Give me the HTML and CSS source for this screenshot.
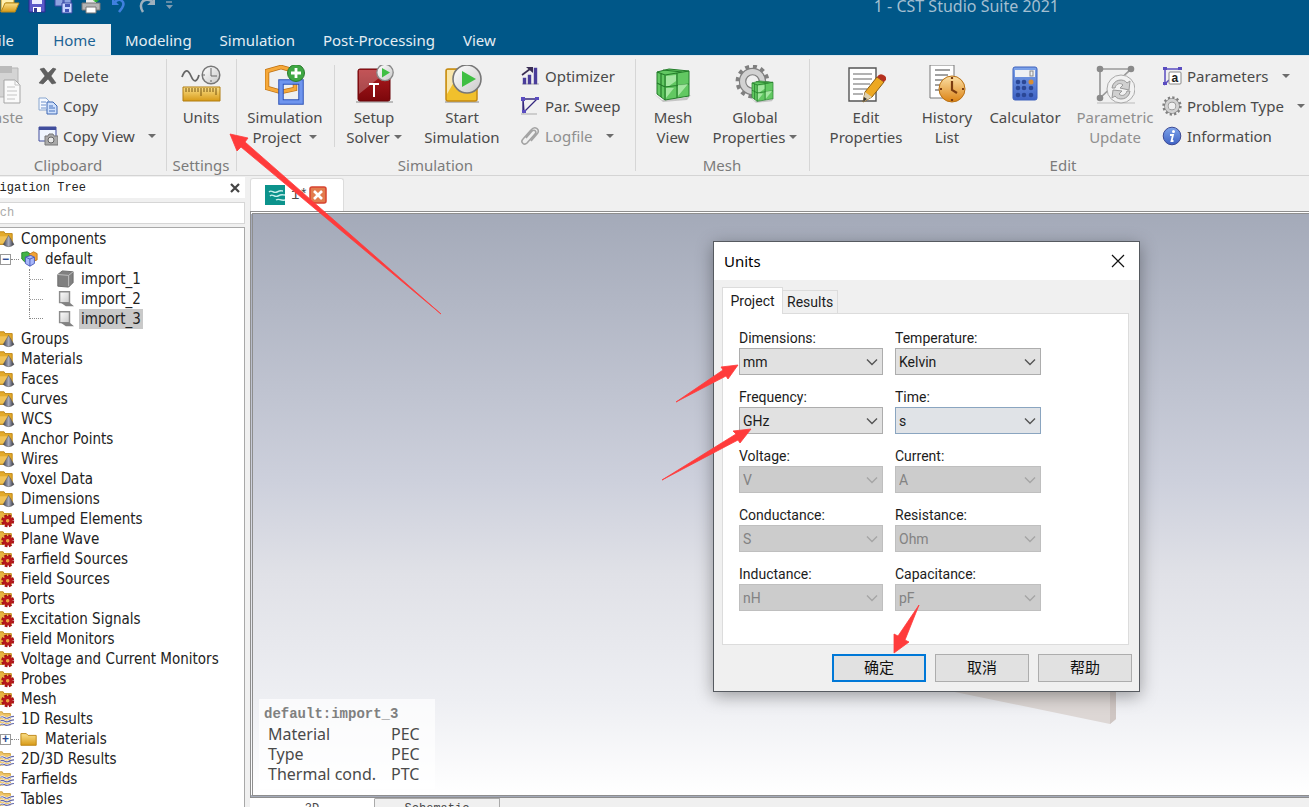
FILE: index.html
```html
<!DOCTYPE html>
<html lang="en">
<head>
<meta charset="utf-8">
<title>1 - CST Studio Suite 2021</title>
<link rel="stylesheet" href="styles.css">
</head>
<body>
<svg class="defs" aria-hidden="true">
  <defs>
    <linearGradient id="gold" x1="0" y1="0" x2="0" y2="1"><stop offset="0" stop-color="#fbe08a"/><stop offset="1" stop-color="#d79a17"/></linearGradient>
    <linearGradient id="red" x1="0" y1="0" x2="0" y2="1"><stop offset="0" stop-color="#b01c20"/><stop offset="1" stop-color="#7c070b"/></linearGradient>
    <linearGradient id="steel" x1="0" y1="0" x2="1" y2="1"><stop offset="0" stop-color="#fff"/><stop offset="1" stop-color="#c9c9c9"/></linearGradient>
    <linearGradient id="cone" x1="0" y1="0" x2="1" y2="0"><stop offset="0" stop-color="#3d3f4a"/><stop offset=".5" stop-color="#a9adc0"/><stop offset="1" stop-color="#30323b"/></linearGradient>
    <linearGradient id="orange" x1="0" y1="0" x2="0" y2="1"><stop offset="0" stop-color="#fbe0a6"/><stop offset="1" stop-color="#dc8314"/></linearGradient>
    <linearGradient id="blue" x1="0" y1="0" x2="0" y2="1"><stop offset="0" stop-color="#7ea4ea"/><stop offset="1" stop-color="#3f62c4"/></linearGradient>
  </defs>
  <symbol id="folder" viewBox="0 0 20 20"><path d="M1 4h6l2 2h9v11H1z" fill="url(#gold)" stroke="#bb8210"/></symbol>
  <symbol id="f-cone" viewBox="0 0 20 20"><path d="M-2 2h11l1 2h8v12H-2z" fill="#e3aa2c" stroke="#bb8210"/><path d="M0 7h15v8H0z" fill="#f0c358"/><path d="M14 6l6 10q-6 5-12 0z" fill="url(#cone)" stroke="#555" stroke-width=".6"/></symbol>
  <symbol id="f-gear" viewBox="0 0 20 20"><path d="M-2 2h10l1 2h8v12H-2z" fill="#e8b542" stroke="#bb8210"/><circle cx="13" cy="12" r="5.6" fill="none" stroke="#a71216" stroke-width="3.200" stroke-dasharray="2.900 1.500"/><circle cx="13" cy="12" r="3.600" fill="none" stroke="#b8181c" stroke-width="3.400"/><circle cx="13" cy="12" r="1.500" fill="#f0a040"/></symbol>
  <symbol id="f-wave" viewBox="0 0 20 20"><path d="M-2 2h9l1 2h8v13H-2z" fill="#efc568" stroke="#c99b35"/><path d="M5 8c4-2 4 2 8 1s3-2 7-2M5 12c4-2 4 2 8 1s3-2 7-2M5 16c4-2 4 2 8 1s3-2 7-2" fill="none" stroke="#fff" stroke-width="2.600"/><path d="M5 8c4-2 4 2 8 1s3-2 7-2M5 12c4-2 4 2 8 1s3-2 7-2M5 16c4-2 4 2 8 1s3-2 7-2" fill="none" stroke="#6368a8" stroke-width="1.300"/></symbol>
  <symbol id="sheet" viewBox="0 0 20 20"><path d="M4 2h11v12H4z" fill="url(#steel)" stroke="#8c8c8c" stroke-width="1.600"/><path d="M5 14h10l5 4h-9z" fill="#828282"/></symbol>
  <symbol id="chev" viewBox="0 0 12 8"><path d="M1 1.500l5 5 5-5" fill="none" stroke="currentColor" stroke-width="1.400"/></symbol>
  <symbol id="cube" viewBox="0 0 38 34"><path d="M0 26l8 6 22-2 7-3-4 5-24 2z" fill="#999" opacity=".5"/><path d="M3 4l12-3 20 2v25l-24 4-8-6z" fill="#62c862" stroke="#237c2a"/><path d="M3 4l8 3 24-4M11 7v25M3 15l8 4 24-3M23 5v25M7 5v24M9 2l19 2" fill="none" stroke="#237c2a" stroke-width="1.200"/><path d="M12 8l10-1v6l-7 5h-3zM24 17l10-1-10 12zM12 20h8l-8 10z" fill="#b4eeb0" opacity=".8"/></symbol>
  <symbol id="gear" viewBox="0 0 30 30"><circle cx="15" cy="15" r="12.500" fill="none" stroke="#808080" stroke-width="4" stroke-dasharray="3.300 3.245"/><circle cx="15" cy="15" r="8.500" fill="none" stroke="#808080" stroke-width="6.400"/><circle cx="15" cy="15" r="8.500" fill="none" stroke="#d2d2d2" stroke-width="4.400"/></symbol>
</svg>

<div class="app">
  <header class="header">
    <div class="titlebar">
      <div class="quick">
        <button aria-label="Open"><svg viewBox="0 0 20 20"><path d="M1 3h13v4H6l-5 9z" fill="#fff0b0" stroke="#b98a1a"/><path d="M5 7h14l-4 9H1z" fill="url(#gold)" stroke="#b98a1a"/></svg></button>
        <button aria-label="Save"><svg viewBox="0 0 20 20"><path d="M2 1h16v15H2z" fill="#5a5ac8" stroke="#2b2b90"/><path d="M5 1h10v7H5z" fill="#e9edff"/><path d="M6 11h8v5H6z" fill="#fff"/><path d="M7 12h3v4H7z" fill="#333b90"/></svg></button>
        <button aria-label="Save all"><svg viewBox="0 0 20 20"><path d="M1 1h9v9H1zM9 3h8v10H9z" fill="#8da3e0" stroke="#394aa5"/><path d="M8 7h10v10H8z" fill="#c8d4ff" stroke="#394aa5"/><path d="M11 8h5v3h-5zM11 13h4v3h-4z" fill="#4355b5"/></svg></button>
        <button aria-label="Print"><svg viewBox="0 0 20 20"><path d="M5 0h10v8H5z" fill="#eee"/><path d="M1 7h18v7H1z" fill="#b5b5b5" stroke="#777"/><path d="M5 11h10v6H5z" fill="#fff" stroke="#777"/><path d="M12 3h6M15 0v6" stroke="#35b13a" stroke-width="3"/></svg></button>
        <button aria-label="Undo"><svg viewBox="0 0 20 20"><path d="M4 2v7h7z" fill="#4080df"/><path d="M7 6c5-5 11 0 7 6l-3 4" fill="none" stroke="#4080df" stroke-width="2.500"/></svg></button>
        <button aria-label="Redo"><svg viewBox="0 0 20 20"><path d="M20 2v7h-8z" fill="#9eb0bd"/><path d="M17 5C8 1 3 8 8 16" fill="none" stroke="#9eb0bd" stroke-width="2.500"/></svg></button>
        <button aria-label="Customize"><svg viewBox="0 0 20 20"><path d="M4 6h6" stroke="#7f9bb0" stroke-width="1.500"/><path d="M4 9h7l-3.500 4z" fill="#7f9bb0"/></svg></button>
      </div>
      <h1 class="title">1 - CST Studio Suite 2021</h1>
    </div>
    <nav class="tabs">
      <button class="tab tab-file">File</button>
      <button class="tab tab-on">Home</button>
      <button class="tab">Modeling</button>
      <button class="tab">Simulation</button>
      <button class="tab">Post-Processing</button>
      <button class="tab">View</button>
    </nav>
  </header>

  <section class="ribbon">
    <div class="group g-clip">
      <div class="tools">
        <button class="big b-paste off"><svg viewBox="0 0 40 40"><path d="M8 3h26v29H8z" fill="#d4d4d4" stroke="#b5b5b5"/><path d="M14 1h14v7H14z" fill="#bbb"/><path d="M20 15h11l5 5v18H20z" fill="#fafafa" stroke="#a5a5a5"/><path d="M31 15v5h5M23 22h8M23 26h10M23 30h10M23 34h8" fill="none" stroke="#c4c4c4"/></svg><span>Paste</span></button>
        <div class="list l-clip">
          <button class="small"><svg viewBox="0 0 20 20"><path d="M2 3l4-1 4 5 5-5 3 1-5 7 5 7-4 1-4-5-5 5-4-1 6-7z" fill="#606060" stroke="#4c4c4c" stroke-width=".5"/></svg>Delete</button>
          <button class="small"><svg viewBox="0 0 20 20"><path d="M1 2h7l3 3v9H1z" fill="#f5f9ff" stroke="#89a6cf"/><path d="M3 6h5M3 9h5M3 12h5" stroke="#6d90cb"/><path d="M9 6h6l4 4v8H9z" fill="#cfe0fb" stroke="#3c67b3"/><path d="M11 10h4M11 12h6M11 15h6" stroke="#4470bd"/></svg>Copy</button>
          <button class="small"><svg viewBox="0 0 20 20"><path d="M1 1h17v14H1z" fill="#f0f6ff" stroke="#404d9c"/><path d="M1 1h17v3H1z" fill="#404d9c"/><path d="M7 10h3l1-2h4l1 2h4v9H7z" fill="#aaa" stroke="#777"/><circle cx="13" cy="14" r="3" fill="#e8e8e8" stroke="#666"/></svg>Copy View<i class="caret"></i></button>
        </div>
      </div>
      <h2>Clipboard</h2>
    </div>
    <div class="group g-set">
      <div class="tools">
        <button class="big b-units"><svg viewBox="0 0 40 40"><path d="M1 12c3-8 6-8 9-1s6 6 8-1" fill="none" stroke="#666" stroke-width="1.800"/><circle cx="30" cy="10" r="8.800" fill="url(#steel)" stroke="#777" stroke-width="1.500"/><path d="M30 3v8h6M30 17v-2M22 10h2" fill="none" stroke="#666"/><path d="M2 22h37v14H2z" fill="url(#gold)" stroke="#b07c10"/><path d="M5 23v4M8 23v4M11 23v4M14 23v4M17 23v4M20 23v8M23 23v4M26 23v4M29 23v4M32 23v4M35 23v7" stroke="#765510"/></svg><span>Units</span></button>
      </div>
      <h2>Settings</h2>
    </div>
    <div class="group g-sim">
      <div class="tools">
        <button class="big b-wide"><svg viewBox="0 0 40 40"><path d="M2 6l14-4 14 4v18l-14 3L2 23z" fill="none" stroke="#bf7011" stroke-width="4.500"/><path d="M2 6l14-4 14 4v18l-14 3L2 23z" fill="none" stroke="#f6a93a" stroke-width="3"/><path d="M16 17h20v20H16z" fill="none" stroke="#2a50b8" stroke-width="5.500"/><path d="M16 17h20v20H16z" fill="none" stroke="#6f95ee" stroke-width="3.500"/><circle cx="31" cy="8" r="8.500" fill="#3fa743" stroke="#2a7a2d"/><path d="M26 8h10M31 3v10" stroke="#fff" stroke-width="2.800"/></svg><span>Simulation</span><span>Project <i class="caret"></i></span></button>
        <i class="rule"></i>
        <button class="big b-mid"><svg viewBox="0 0 40 40"><path d="M2 37h37" stroke="#bbb" stroke-width="2"/><rect x="4" y="4" width="32" height="32" rx="2" fill="url(#red)" stroke="#6b0508"/><path d="M5 5h30L5 29z" fill="#fff" opacity=".25"/><path d="M15 19h10M20 19v13" stroke="#fff" stroke-width="2"/><circle cx="31" cy="7.500" r="8.200" fill="url(#steel)" stroke="#888" stroke-width="1.300"/><path d="M28 3l8 4.500-8 5z" fill="#3fbf43"/></svg><span>Setup</span><span>Solver<i class="caret"></i></span></button>
        <button class="big b-wide"><svg viewBox="0 0 40 40"><path d="M3 37h34" stroke="#bbb" stroke-width="2"/><rect x="4" y="4" width="31" height="32" rx="2" fill="#f1c02c" stroke="#c48912" stroke-width="1.500"/><path d="M5 5h14L5 29z" fill="#fff" opacity=".6"/><circle cx="25" cy="14" r="14" fill="url(#steel)" stroke="#777" stroke-width="1.600"/><path d="M20 6l14 8-14 8z" fill="#3fbf43"/></svg><span>Start</span><span>Simulation</span></button>
        <div class="list l-sim">
          <button class="small"><svg viewBox="0 0 20 20"><path d="M2 18h17" stroke="#aaa"/><path d="M4 13h1v4H4zM9 10h1v7H9zM15 3h1v14h-1z" fill="#8b82d8" stroke="#4a3d9a" stroke-width="2.400"/><path d="M2 9l8-6" stroke="#3b2e55" stroke-width="1.600"/><path d="M6 1h7v6z" fill="#3b2e55"/></svg>Optimizer</button>
          <button class="small"><svg viewBox="0 0 20 20"><path d="M1 18h16" stroke="#aaa"/><path d="M3 3h14L4 16zV16" fill="none" stroke="#35287f" stroke-width="1.400"/><path d="M1 1h4v4H1zM15 1h4v3h-4zM2 14h4v3H2z" fill="#5a4cc0"/></svg>Par. Sweep</button>
          <button class="small off"><svg viewBox="0 0 20 20"><path d="M6 12l6-7c3-2 5 1 3 3l-8 9c-3 3-7-1-4-4l8-9c4-5 10 0 6 4l-6 7" fill="none" stroke="#a4a4a4" stroke-width="1.600"/></svg>Logfile<i class="caret"></i></button>
        </div>
      </div>
      <h2>Simulation</h2>
    </div>
    <div class="group g-mesh">
      <div class="tools">
        <button class="big b-mesh"><svg viewBox="0 0 40 40"><use href="#cube" x="1" y="3" width="38" height="34"/></svg><span>Mesh</span><span>View</span></button>
        <button class="big b-glob"><svg viewBox="0 0 40 40"><use href="#gear" x="0" y="-1" width="35" height="35"/><use href="#cube" x="15" y="15" width="25" height="23"/></svg><span>Global</span><span>Properties<i class="caret"></i></span></button>
      </div>
      <h2>Mesh</h2>
    </div>
    <div class="group g-edit">
      <div class="tools">
        <button class="big b-edit"><svg viewBox="0 0 40 40"><path d="M3 3h27v33H3z" fill="#fff" stroke="#555" stroke-width="1.400"/><path d="M7 9h19M7 14h19M7 19h17M7 24h14M7 29h10" stroke="#666" stroke-width="1.200"/><path d="M17 37l2-10L31 12l7 5-12 15z" fill="#eda822" stroke="#8a5c10"/><path d="M17 37l2-10 7 5z" fill="#ddd0b0"/><path d="M17 37l1-5 3 2z" fill="#333"/><path d="M31 12q3-5 8-1 3 3-1 6z" fill="#b5301f"/></svg><span>Edit</span><span>Properties</span></button>
        <button class="big b-hist"><svg viewBox="0 0 40 40"><path d="M3 0h24v33H3z" fill="#fff" stroke="#777"/><path d="M8 5h15M8 10h13M8 15h9M8 20h6M8 25h6" stroke="#444"/><circle cx="25" cy="24" r="13" fill="url(#orange)" stroke="#b97115"/><path d="M25 16v9l5 3M25 12v2M25 34v2M13 24h2M35 24h2" fill="none" stroke="#7b3c10" stroke-width="2.200"/></svg><span>History</span><span>List</span></button>
        <button class="big b-calc"><svg viewBox="0 0 40 40"><rect x="8" y="2" width="24" height="33" rx="2" fill="url(#blue)" stroke="#3d60bc"/><path d="M10 5h20v7H10z" fill="#eef0f4"/><rect x="25" y="6" width="3" height="5" fill="none" stroke="#888"/><g fill="#2b4796"><circle cx="13" cy="17" r="2.300"/><circle cx="19" cy="17" r="2.300"/><circle cx="13" cy="23" r="2.300"/><circle cx="19" cy="23" r="2.300"/><circle cx="26" cy="23" r="2.300"/><circle cx="13" cy="30" r="2.300"/><circle cx="19" cy="30" r="2.300"/><circle cx="26" cy="30" r="2.300"/></g><circle cx="26" cy="17" r="2.500" fill="#d88d34"/></svg><span>Calculator</span></button>
        <button class="big b-par off"><svg viewBox="0 0 40 40"><path d="M2 38h38" stroke="#bbb"/><path d="M5 33V4h31L5 33" fill="none" stroke="#999" stroke-width="1.700"/><g fill="#8a8a8a"><circle cx="5" cy="4" r="3.300"/><circle cx="36" cy="4" r="3.300"/><circle cx="5" cy="33" r="3.300"/></g><circle cx="26" cy="24" r="14" fill="#f2f2f2" stroke="#aaa"/><path d="M17 23c1-9 12-10 15-5l3-2-1 9-9-2 3-3c-3-3-7-1-8 3zM35 26c-1 9-12 10-15 5l-3 2 1-8 9 1-3 3c3 3 7 1 8-3z" fill="#d0d0d0" stroke="#999"/></svg><span>Parametric</span><span>Update</span></button>
        <div class="list l-edit">
          <button class="small"><svg viewBox="0 0 20 20"><path d="M3 3h15M3 3v15l4-4" fill="none" stroke="#5a4cc0" stroke-width="1.500"/><path d="M1 1h4v3H1zM16 1h4v3h-4zM1 16h4v3H1z" fill="#5a4cc0"/><rect x="7" y="6" width="12" height="12" rx="1" fill="#fff" stroke="#888"/><text x="9.500" y="16" class="glyph">a</text></svg>Parameters<i class="caret"></i></button>
          <button class="small"><svg viewBox="0 0 20 20"><use href="#gear" width="20" height="20"/></svg>Problem Type<i class="caret"></i></button>
          <button class="small"><svg viewBox="0 0 20 20"><circle cx="10" cy="10" r="8.800" fill="url(#blue)" stroke="#3c4a95"/><circle cx="11.500" cy="5.500" r="1.500" fill="#fff"/><path d="M8 9h3l-1.500 6h2" fill="none" stroke="#fff" stroke-width="1.800"/></svg>Information</button>
        </div>
      </div>
      <h2>Edit</h2>
    </div>
  </section>

  <main class="work">
    <aside class="side">
      <div class="side-head"><h2>Navigation Tree</h2><button aria-label="Close"><svg viewBox="0 0 10 10"><path d="M1 1l8 8M9 1L1 9" stroke="#444" stroke-width="2.200"/></svg></button></div>
      <input class="search" type="text" aria-label="Search" placeholder="Search">
      <ul class="tree">
        <li><svg><use href="#f-cone"/></svg>Components</li>
        <li class="sub"><i class="box">−</i><i class="dots"></i><svg viewBox="0 0 20 20"><path d="M2 3l6-1 3 2v8l-6 1-3-3z" fill="#42b547" stroke="#238129"/><path d="M10 5l5-3 4 2v7l-5 2z" fill="#f2a235" stroke="#bd751a"/><path d="M6 8l6-2 4 2v7l-5 3-5-3z" fill="#a9b8fa" stroke="#4557b8"/><path d="M6 8l5 2 5-2M11 10v8" fill="none" stroke="#4557b8"/></svg>default</li>
        <li class="leaf"><i class="branch"></i><svg viewBox="0 0 20 20"><path d="M2 5l5-4 12 1v12l-5 5-12-1z" fill="#808080" stroke="#666"/><path d="M2 5l12 1 5-4M14 6v12" fill="none" stroke="#c4c4c4"/></svg><span>import_1</span></li>
        <li class="leaf"><i class="branch"></i><svg><use href="#sheet"/></svg><span>import_2</span></li>
        <li class="leaf"><i class="branch last"></i><svg><use href="#sheet"/></svg><span class="picked">import_3</span></li>
        <li><svg><use href="#f-cone"/></svg>Groups</li>
        <li><svg><use href="#f-cone"/></svg>Materials</li>
        <li><svg><use href="#f-cone"/></svg>Faces</li>
        <li><svg><use href="#f-cone"/></svg>Curves</li>
        <li><svg><use href="#f-cone"/></svg>WCS</li>
        <li><svg><use href="#f-cone"/></svg>Anchor Points</li>
        <li><svg><use href="#f-cone"/></svg>Wires</li>
        <li><svg><use href="#f-cone"/></svg>Voxel Data</li>
        <li><svg><use href="#f-cone"/></svg>Dimensions</li>
        <li><svg><use href="#f-gear"/></svg>Lumped Elements</li>
        <li><svg><use href="#f-gear"/></svg>Plane Wave</li>
        <li><svg><use href="#f-gear"/></svg>Farfield Sources</li>
        <li><svg><use href="#f-gear"/></svg>Field Sources</li>
        <li><svg><use href="#f-gear"/></svg>Ports</li>
        <li><svg><use href="#f-gear"/></svg>Excitation Signals</li>
        <li><svg><use href="#f-gear"/></svg>Field Monitors</li>
        <li><svg><use href="#f-gear"/></svg>Voltage and Current Monitors</li>
        <li><svg><use href="#f-gear"/></svg>Probes</li>
        <li><svg><use href="#f-gear"/></svg>Mesh</li>
        <li><svg><use href="#f-wave"/></svg>1D Results</li>
        <li class="sub"><i class="box">+</i><i class="dots"></i><svg><use href="#folder"/></svg>Materials</li>
        <li><svg><use href="#f-wave"/></svg>2D/3D Results</li>
        <li><svg><use href="#f-wave"/></svg>Farfields</li>
        <li><svg><use href="#f-wave"/></svg>Tables</li>
      </ul>
    </aside>

    <section class="doc">
      <div class="doc-tab">
        <svg viewBox="0 0 20 20"><path d="M0 0h20v20H0z" fill="#0c938c"/><path d="M4 7c3-3 4 2 8 0s4-1 6-1M5 11c3-3 4 2 8 0s4-1 7-1M11 15c3-2 4 1 9 0" fill="none" stroke="#c9f0ec" stroke-width="1.400"/></svg>
        <span>1*</span>
        <button aria-label="Close document"><svg viewBox="0 0 18 18"><rect x="1" y="1" width="16" height="16" rx="2" fill="#e27c4e" stroke="#d8432f" stroke-width="1.500"/><path d="M5 5l8 8M13 5l-8 8" stroke="#fff" stroke-width="2.600"/></svg></button>
      </div>
      <div class="view">
        <svg class="model" viewBox="0 0 166 36"><path d="M0 0h166v29l-6 5L0 1z" fill="#ddd7d5"/><path d="M160 0h6v29l-6 5z" fill="#cfc6c3"/></svg>
        <div class="info">
          <h3>default:import_3</h3>
          <dl><dt>Material</dt><dd>PEC</dd><dt>Type</dt><dd>PEC</dd><dt>Thermal cond.</dt><dd>PTC</dd></dl>
        </div>
      </div>
      <div class="doc-foot"><button class="foot-on">3D</button><button>Schematic</button></div>
    </section>
  </main>
</div>

<div class="dialog" role="dialog" aria-label="Units">
  <div class="dlg-head"><h2>Units</h2><button aria-label="Close dialog"><svg viewBox="0 0 14 14"><path d="M1 1l12 12M13 1L1 13" stroke="#111" stroke-width="1.200"/></svg></button></div>
  <div class="dlg-tabs"><button class="dlg-on">Project</button><button>Results</button></div>
  <div class="panel">
    <div class="field"><label for="dim">Dimensions:</label><div class="pick"><select id="dim"><option>mm</option></select><svg><use href="#chev"/></svg></div></div>
    <div class="field"><label for="tem">Temperature:</label><div class="pick"><select id="tem"><option>Kelvin</option></select><svg><use href="#chev"/></svg></div></div>
    <div class="field"><label for="fre">Frequency:</label><div class="pick"><select id="fre"><option>GHz</option></select><svg><use href="#chev"/></svg></div></div>
    <div class="field"><label for="tim">Time:</label><div class="pick"><select id="tim" class="hot"><option>s</option></select><svg><use href="#chev"/></svg></div></div>
    <div class="field"><label for="vol">Voltage:</label><div class="pick"><select id="vol" disabled><option>V</option></select><svg><use href="#chev"/></svg></div></div>
    <div class="field"><label for="cur">Current:</label><div class="pick"><select id="cur" disabled><option>A</option></select><svg><use href="#chev"/></svg></div></div>
    <div class="field"><label for="con">Conductance:</label><div class="pick"><select id="con" disabled><option>S</option></select><svg><use href="#chev"/></svg></div></div>
    <div class="field"><label for="res">Resistance:</label><div class="pick"><select id="res" disabled><option>Ohm</option></select><svg><use href="#chev"/></svg></div></div>
    <div class="field"><label for="ind">Inductance:</label><div class="pick"><select id="ind" disabled><option>nH</option></select><svg><use href="#chev"/></svg></div></div>
    <div class="field"><label for="cap">Capacitance:</label><div class="pick"><select id="cap" disabled><option>pF</option></select><svg><use href="#chev"/></svg></div></div>
  </div>
  <div class="dlg-foot"><button class="ok">确定</button><button>取消</button><button>帮助</button></div>
</div>

<svg class="arrows" width="1309" height="807" aria-hidden="true">
  <g fill="#ff3b3b" stroke="#ff3b3b" stroke-width=".8">
    <path d="M230 134l18 4-3 4 196 172-200-167-4 4z"/>
    <path d="M738 365l-17 2 2 3-47 32 50-26 2 3z"/>
    <path d="M751 429l-18 2 3 3-74 46 76-40 2 3z"/>
    <path d="M894 653v-19l4 2 21-31-14 35 4 2z"/>
  </g>
</svg>
</body>
</html>
```
FILE: styles.css
```css
* { box-sizing: border-box; }
body {
  margin: 0;
  height: 100vh;
  overflow: hidden;
  background: #f0f0f0;
  color: #4a4a4a;
  font: 15px/20px "Noto Sans", "Noto Sans CJK SC", sans-serif;
}
h1, h2, h3, ul, dl, dd { margin: 0; padding: 0; font: inherit; }
button, select, input { margin: 0; padding: 0; border: 0; background: none; color: inherit; font: inherit; }
.defs { position: absolute; width: 0; height: 0; }

/* The window hangs over the top-left corner of the screen. */
.app {
  display: flex;
  flex-direction: column;
  height: calc(100vh + 20px);
  margin: -8px 0 0 -30px;
}

.header { flex: none; background: #005788; color: #e4edf3; }
.titlebar { display: flex; align-items: center; height: 28px; }
.quick { display: flex; gap: 7px; padding-left: 30px; }
.quick svg { display: block; width: 20px; height: 20px; overflow: visible; }
.title { margin-left: auto; margin-right: 250px; color: #a3bfd1; font-size: 16px; }
.tabs { display: flex; height: 35px; padding: 4px 0 0 6px; }
.tab { padding: 0 14px; }
.tab-file { margin-right: 10px; }
.tab-on { width: 73px; background: #f0f0f0; color: #1c6394; }

.ribbon { display: flex; flex: none; height: 121px; border-bottom: 1px solid #d4d4d4; border-top: 1px solid #dfe8ee; }
.group { display: flex; flex: none; flex-direction: column; padding-top: 5px; position: relative; }
.group + .group::before { content: ""; position: absolute; left: 0; top: 3px; bottom: 4px; width: 1px; background: #d6d6d6; }
.tools { display: flex; flex: 1; }
.group h2 { height: 20px; color: #7b7b7b; text-align: center; }
.g-clip { width: 196px; padding-left: 10px; }
.g-clip h2 { margin-left: -10px; }
.g-set { width: 70px; }
.g-sim { width: 399px; }
.g-mesh { width: 174px; }
.g-edit { width: 508px; }
.g-edit .tools { padding-left: 1px; }
.big { display: flex; flex: none; flex-direction: column; align-items: center; padding-top: 4px; white-space: nowrap; }
.big svg { width: 40px; height: 40px; margin-bottom: 2px; }
.b-paste { width: 48px; }
.b-units { width: 70px; }
.b-wide { width: 98px; }
.b-mid { width: 78px; }
.b-mesh { width: 76px; }
.b-glob { width: 88px; }
.b-edit { width: 112px; }
.b-hist { width: 50px; }
.b-calc { width: 106px; }
.b-par { width: 74px; }
.rule { width: 1px; height: 82px; margin-top: 4px; background: #d6d6d6; }
.list { display: flex; flex-direction: column; align-items: flex-start; }
.l-clip, .l-edit { margin-left: 10px; }
.l-sim { margin-left: 9px; }
.small { display: flex; align-items: center; gap: 5px; height: 30px; white-space: nowrap; }
.small svg { width: 20px; height: 20px; }
.off { color: #8f8f8f; }
.caret { display: inline-block; border: 4px solid transparent; border-top-color: #6c6c6c; border-bottom: 0; vertical-align: 4px; margin-left: 4px; }
.small .caret { margin-left: 8px; }
.glyph { font: bold 12px "Liberation Sans", sans-serif; fill: #222; }

.work { display: flex; flex: 1; min-height: 0; }
.side { display: flex; flex: none; flex-direction: column; width: 275px; padding-top: 1px; }
.side-head { display: flex; align-items: center; height: 21px; padding: 0 5px 0 8px; background: #fff; color: #222; font: 12px/20px "Liberation Mono", monospace; }
.side-head button { margin-left: auto; }
.side-head svg { display: block; width: 10px; height: 10px; }
.search { flex: none; height: 22px; margin: 4px 0 3px; padding-left: 0; border: 1px solid #d6d6d6; background: #fff; font: 12px/20px "Liberation Mono", monospace; }
.search::placeholder { color: #aaa; opacity: 1; }
.tree { flex: 1; min-height: 0; overflow: hidden; padding: 1px 0 0 24px; border: 1px solid #a8a8a8; background: #fff; color: #222; font: 15px/20px "DejaVu Sans Condensed", "DejaVu Sans", sans-serif; list-style: none; }
.tree li { display: flex; align-items: center; height: 20px; }
.tree svg { flex: none; width: 20px; height: 18px; margin-right: 6px; }
.tree .box { width: 11px; height: 11px; margin-left: 5px; border: 1px solid #999; color: #2b4a92; font: bold 12px/9px "Liberation Sans", sans-serif; text-align: center; }
.dots { width: 8px; border-top: 1px dotted #888; }
.branch { align-self: stretch; width: 14px; margin: 0 12px 0 34px; border-left: 1px dotted #888; background: repeating-linear-gradient(90deg, #999 0 1px, #fff 1px 2px) 0 10px / 14px 1px no-repeat; }
.branch.last { height: 10px; align-self: flex-start; background: none; border-bottom: 1px dotted #888; }
.leaf svg { margin-right: 4px; }
.leaf span { padding: 0 2px; }
.picked { background: #c9c9c9; }

.doc { display: flex; flex: 1; flex-direction: column; min-width: 0; padding-left: 5px; }
.doc-tab { display: flex; flex: none; align-items: center; gap: 6px; width: 94px; height: 33px; margin-top: 2px; padding-left: 14px; border: 1px solid #dcdcdc; border-bottom: 0; border-radius: 3px 3px 0 0; background: #fff; font: 14px/20px "Liberation Mono", monospace; }
.doc-tab svg { display: block; width: 20px; height: 20px; }
.doc-tab button svg { width: 18px; height: 18px; }
.doc-tab span { width: 12px; }
.view { position: relative; flex: 1; border: 3px double #8e8e8e; border-right: 0; background: linear-gradient(#a4aab9, #cdd0dc 46%, #e0e1e7 62%, #eeeff3 84%, #fff); }
.model { position: absolute; left: 697px; top: 476px; width: 166px; height: 36px; }
.info { position: absolute; left: 6px; bottom: 6px; width: 176px; padding: 5px 0 5px 9px; background: rgba(255, 255, 255, .7); font-size: 16px; }
.info h3 { margin-left: -4px; color: #808080; font: bold 14px/20px "Liberation Mono", monospace; }
.info dl { display: grid; grid-template-columns: 123px auto; }
.doc-foot { display: flex; flex: none; height: 21px; font: 12px/20px "Liberation Mono", monospace; }
.doc-foot button { width: 125px; border-top: 1px solid #aaa; border-right: 1px solid #aaa; }
.doc-foot .foot-on { border-top-color: #fff; background: #fff; }

.dialog { position: absolute; left: 713px; top: 241px; width: 427px; border: 1px solid #565a60; background: #f0f0f0; box-shadow: 0 4px 16px rgba(0, 0, 0, .35); color: #1c1c1c; font: 14px/20px "Roboto", "Noto Sans CJK SC", sans-serif; padding-bottom: 9px; }
.dlg-head { display: flex; align-items: center; justify-content: space-between; height: 38px; padding: 0 14px 0 10px; background: #fff; color: #000; font: 15px/20px "Noto Sans", sans-serif; }
.dlg-head svg { display: block; width: 14px; height: 14px; }
.dlg-tabs { display: flex; align-items: flex-end; padding: 7px 8px 0; }
.dlg-tabs button { height: 23px; padding: 0 4px; border: 1px solid #dcdcdc; border-bottom: 0; border-left: 0; }
.dlg-tabs .dlg-on { position: relative; height: 27px; width: 61px; margin-bottom: -1px; border-left: 1px solid #dcdcdc; background: #fff; }
.panel { display: grid; grid-template-columns: 144px 146px; gap: 12px; height: 332px; margin: 0 10px 9px 8px; padding: 14px 0 0 16px; border: 1px solid #dcdcdc; background: #fff; align-content: start; }
.field label { display: block; }
.pick { display: grid; align-items: center; }
.pick select, .pick svg { grid-area: 1 / 1; }
.pick select { height: 27px; padding-left: 3px; appearance: none; border: 1px solid #adadad; border-radius: 0; background: #e1e1e1; opacity: 1; }
.pick select.hot { border-color: #8aa5c0; background: #e0e3e7; }
.pick select:disabled { border-color: #bfbfbf; background: #ccc; color: #838383; }
.pick svg { justify-self: end; width: 12px; height: 8px; margin-right: 5px; color: #555; pointer-events: none; }
.pick select:disabled + svg { color: #a5a5a5; }
.dlg-foot { display: flex; justify-content: flex-end; gap: 9px; padding-right: 7px; }
.dlg-foot button { width: 94px; height: 28px; border: 1px solid #adadad; background: #e1e1e1; font-size: 15px; color: #111; }
.dlg-foot .ok { border: 2px solid #0078d7; }

.arrows { position: absolute; left: 0; top: 0; pointer-events: none; }
```
